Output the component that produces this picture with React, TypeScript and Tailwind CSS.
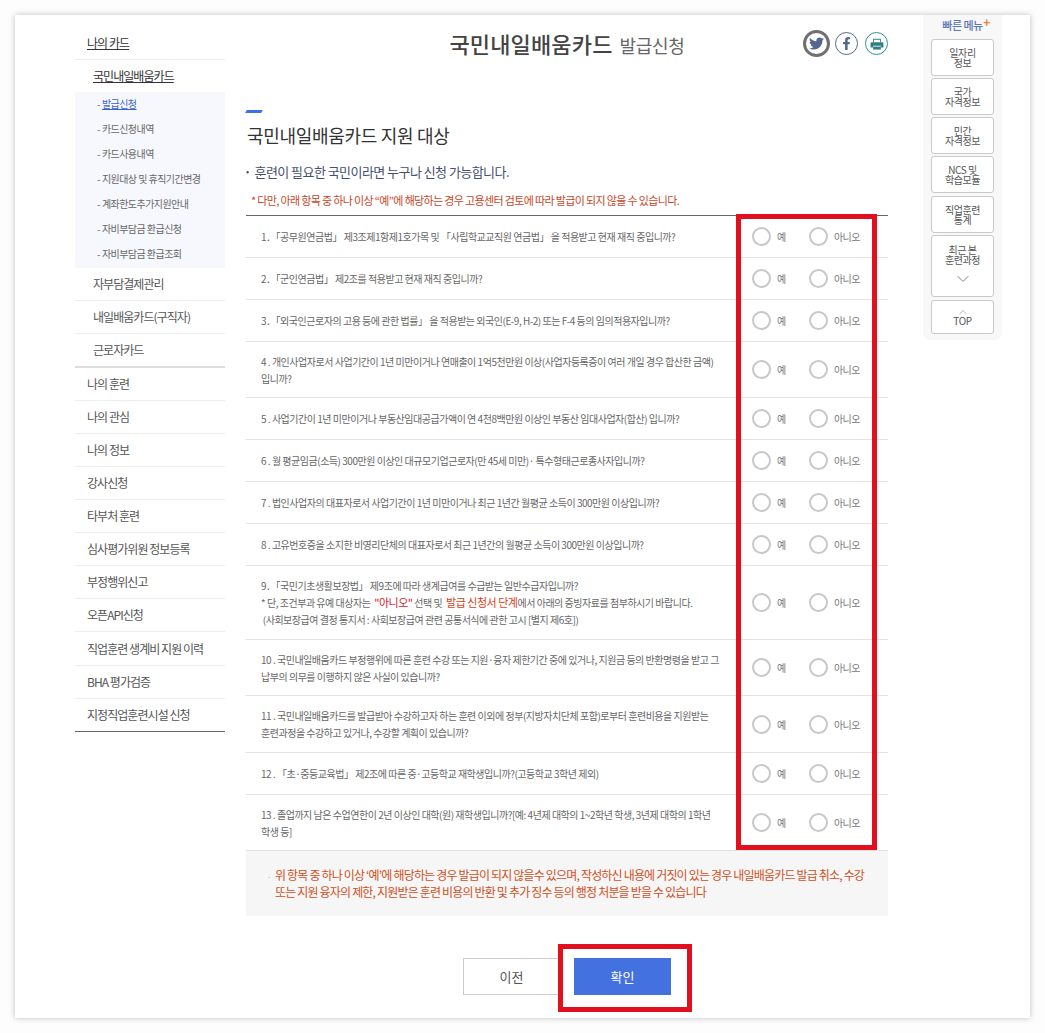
import { FaTwitter, FaFacebookF } from 'react-icons/fa'
import { ChevronDown, ChevronUp } from 'lucide-react'
import type { ReactNode } from 'react'

const subMenu = ['발급신청', '카드신청내역', '카드사용내역', '지원대상 및 휴직기간변경', '계좌한도추가지원안내', '자비부담금 환급신청', '자비부담금 환급조회']
const cardMenu = ['자부담결제관리', '내일배움카드(구직자)', '근로자카드']
const mainMenu = ['나의 훈련', '나의 관심', '나의 정보', '강사신청', '타부처 훈련', '심사평가위원 정보등록', '부정행위신고', '오픈API신청', '직업훈련 생계비 지원 이력', 'BHA 평가검증', '지정직업훈련시설 신청']

const questions: { h: string; text: ReactNode }[] = [
  { h: 'h-[42px]', text: '1．「공무원연금법」 제3조제1항제1호가목 및 「사립학교교직원 연금법」 을 적용받고 현재 재직 중입니까?' },
  { h: 'h-[42px]', text: '2．「군인연금법」 제2조를 적용받고 현재 재직 중입니까?' },
  { h: 'h-[42px]', text: '3．「외국인근로자의 고용 등에 관한 법률」 을 적용받는 외국인(E-9, H-2) 또는 F-4 등의 임의적용자입니까?' },
  { h: 'h-[56px]', text: '4 . 개인사업자로서 사업기간이 1년 미만이거나 연매출이 1억5천만원 이상(사업자등록증이 여러 개일 경우 합산한 금액) 입니까?' },
  { h: 'h-[42px]', text: '5 . 사업기간이 1년 미만이거나 부동산임대공급가액이 연 4천8백만원 이상인 부동산 임대사업자(합산) 입니까?' },
  { h: 'h-[42px]', text: '6 . 월 평균임금(소득) 300만원 이상인 대규모기업근로자(만 45세 미만)· 특수형태근로종사자입니까?' },
  { h: 'h-[42px]', text: '7 . 법인사업자의 대표자로서 사업기간이 1년 미만이거나 최근 1년간 월평균 소득이 300만원 이상입니까?' },
  { h: 'h-[42px]', text: '8 . 고유번호증을 소지한 비영리단체의 대표자로서 최근 1년간의 월평균 소득이 300만원 이상입니까?' },
  {
    h: 'h-[74px]',
    text: (
      <>
        9．「국민기초생활보장법」 제9조에 따라 생계급여를 수급받는 일반수급자입니까?
        <br />
        * 단, 조건부과 유예 대상자는 <span className="text-[11px] text-[#d4202a]">&nbsp;"아니오"</span> 선택 및 <span className="text-[11px] text-[#d8401a]">&nbsp;발급 신청서 단계</span>에서 아래의 증빙자료를 첨부하시기 바랍니다.
        <br />
        &nbsp;(사회보장급여 결정 통지서 : 사회보장급여 관련 공통서식에 관한 고시 [별지 제6호])
      </>
    ),
  },
  { h: 'h-[56px]', text: '10 . 국민내일배움카드 부정행위에 따른 훈련 수강 또는 지원·융자 제한기간 중에 있거나, 지원금 등의 반환명령을 받고 그 납부의 의무를 이행하지 않은 사실이 있습니까?' },
  { h: 'h-[57px]', text: '11 . 국민내일배움카드를 발급받아 수강하고자 하는 훈련 이외에 정부(지방자치단체 포함)로부터 훈련비용을 지원받는 훈련과정을 수강하고 있거나, 수강할 계획이 있습니까?' },
  { h: 'h-[42px]', text: '12 . 「초·중등교육법」 제2조에 따른 중·고등학교 재학생입니까?(고등학교 3학년 제외)' },
  { h: 'h-[56px]', text: '13 . 졸업까지 남은 수업연한이 2년 이상인 대학(원) 재학생입니까?[예: 4년제 대학의 1~2학년 학생, 3년제 대학의 1학년 학생 등]' },
]

const quickMenu = [
  { label: ['일자리', '정보'], h: 'h-[37px]' },
  { label: ['국가', '자격정보'], h: 'h-[37px]' },
  { label: ['민간', '자격정보'], h: 'h-[37px]' },
  { label: ['NCS 및', '학습모듈'], h: 'h-[37px]' },
  { label: ['직업훈련', '통계'], h: 'h-[37px] mt-[1px]' },
]

function Radio({ label, className }: { label: string; className: string }) {
  return (
    <span className={`flex items-center gap-[6px] ${className}`}>
      <span className="h-[19px] w-[19px] shrink-0 rounded-full border-2 border-[#c8c8c8] bg-white" />
      <span className="text-[10px] tracking-[-0.6px] text-[#777]">{label}</span>
    </span>
  )
}

function QuickButton({ children, className }: { children: ReactNode; className: string }) {
  return (
    <div className={`flex w-[63px] flex-col items-center justify-center rounded-[3px] border border-[#c9c9c9] bg-white text-center text-[10px] leading-[10px] tracking-[-0.4px] text-[#555] ${className}`}>
      {children}
    </div>
  )
}

function PrintIcon() {
  return (
    <svg viewBox="0 0 16 14" className="h-[12px] w-[14px]" fill="#2f8085">
      <path d="M3.5 5V1h9v4h-1V2h-7v3z" />
      <path d="M1.5 5h13a1 1 0 0 1 1 1v5h-3V9h-9v2h-3V6a1 1 0 0 1 1-1z" />
      <rect x="3.5" y="10" width="9" height="3.5" />
    </svg>
  )
}

export default function App() {
  return (
    <div
      className="relative h-[1033px] w-[1045px] overflow-hidden bg-[#fdfdfd] p-[15px] text-[#555]"
      style={{ fontFamily: '"Noto Sans CJK KR", "Noto Sans", sans-serif' }}
    >
      <div className="flex h-[1003px] bg-white shadow-[0_0_6px_rgba(0,0,0,0.25)]">
        <aside className="ml-[60px] w-[150px] shrink-0 text-[12px] tracking-[-0.95px] text-[#555]">
          <div className="flex h-[45px] items-end border-b border-[#eee] pb-[7px] pl-[12px] text-[#333] underline">나의 카드</div>
          <div className="flex h-[32px] items-center pl-[18px] text-[#333] underline">국민내일배움카드</div>
          <ul className="h-[176px] bg-[#f6f8fd] text-[10px] tracking-[-0.55px] text-[#666]">
            {subMenu.map((item, i) => (
              <li key={item} className="flex h-[25px] items-center pb-[2px] pl-[22px]">
                - {i === 0 ? <span className="ml-[2px] text-[#3a63cf] underline">{item}</span> : <span className="ml-[2px]">{item}</span>}
              </li>
            ))}
          </ul>
          {cardMenu.map((item, i) => (
            <div key={item} className={`flex items-center pl-[18px] ${i === 2 ? 'h-[34px] border-b-2 border-[#ddd]' : 'h-[33px] border-b border-[#eee]'}`}>
              {item}
            </div>
          ))}
          {mainMenu.map((item, i) => (
            <div key={item} className={`flex items-center pl-[12px] ${i === 8 ? 'h-[34px]' : 'h-[33px]'} ${i === mainMenu.length - 1 ? 'border-b border-[#666]' : 'border-b border-[#eee]'}`}>
              {item}
            </div>
          ))}
        </aside>

        <main className="ml-[21px] w-[642px] shrink-0">
          <div className="relative flex h-[58px] justify-center pt-[13px] text-[#444]">
            <span className="text-[22px] font-medium leading-[30px] tracking-[0.15px]">국민내일배움카드</span>
            <span className="ml-[7px] mt-[3px] text-[18px] leading-[28px] tracking-[-0.3px] text-[#666]">발급신청</span>
            <div className="absolute right-0 top-[15px] flex items-center">
              <span className="flex h-[27px] w-[27px] items-center justify-center rounded-full border-[3px] border-[#707070] text-[15px] text-[#56678f]"><FaTwitter /></span>
              <span className="ml-[5px] flex h-[23px] w-[23px] items-center justify-center rounded-full border border-[#56678f] text-[13px] text-[#56678f]"><FaFacebookF /></span>
              <span className="ml-[7px] flex h-[23px] w-[23px] items-center justify-center rounded-full border border-[#2f8f8a]"><PrintIcon /></span>
            </div>
          </div>
          <div className="ml-0 mt-[37px] h-[3px] w-[16px] -skew-x-[30deg] bg-[#3f6fe0]" />
          <h3 className="ml-px mt-[8px] text-[18px] font-normal leading-[28px] tracking-[-0.3px] text-[#333]">국민내일배움카드 지원 대상</h3>
          <p className="mt-[13px] flex h-[20px] items-center text-[13px] tracking-[-0.55px] text-[#46506e]">
            <span className="mr-[6px] text-[9px]">•</span>훈련이 필요한 국민이라면 누구나 신청 가능합니다.
          </p>
          <p className="ml-[5px] mt-[8px] h-[20px] text-[11px] leading-[20px] tracking-[-0.65px] text-[#c8451f]">* 다만, 아래 항목 중 하나 이상 “예”에 해당하는 경우 고용센터 검토에 따라 발급이 되지 않을 수 있습니다.</p>
          <div className="mt-[5px] border-t border-[#666]">
            {questions.map((q, i) => (
              <div key={i} className={`flex items-center border-b border-[#e2e2e2] ${q.h}`}>
                <div className="w-[490px] shrink-0 break-keep pl-[15px] pr-[12px] text-[10px] leading-[17px] tracking-[-0.48px] text-[#666]">{q.text}</div>
                <Radio label="예" className="w-[57px] pl-[16px] box-content" />
                <Radio label="아니오" className="" />
              </div>
            ))}
          </div>
          <div className="h-[65px] bg-[#f6f6f6] pl-[29px] pr-[20px] pt-[16px] text-[12px] leading-[15px] tracking-[-0.82px] text-[#d0501c]">
            <span className="-ml-[8px] inline-block w-[8px] text-[8px] text-[#aaa]">·</span>위 항목 중 하나 이상 ‘예’에 해당하는 경우 발급이 되지 않을수 있으며, 작성하신 내용에 거짓이 있는 경우 내일배움카드 발급 취소, 수강 또는 지원 융자의 제한, 지원받은 훈련 비용의 반환 및 추가 징수 등의 행정 처분을 받을 수 있습니다
          </div>
          <div className="mt-[42px] flex justify-center gap-[14px]">
            <div className="flex h-[37px] w-[97px] items-center justify-center border border-[#ccc] text-[13px] text-[#555]">이전</div>
            <div className="flex h-[37px] w-[97px] items-center justify-center bg-[#4371e0] text-[13px] text-white">확인</div>
          </div>
        </main>

        <nav className="ml-[35px] flex h-[325px] w-[79px] shrink-0 flex-col items-center rounded-b-[8px] bg-[#f8f8f8]">
          <div className="relative h-[24px] pt-[2px] text-[11px] font-medium leading-[16px] tracking-[-0.5px] text-[#5c74b8]">
            빠른 메뉴<span className="absolute -right-[7px] -top-[1px] text-[12px] font-bold text-[#f08030]">+</span>
          </div>
          <div className="flex flex-col gap-[2px]">
            {quickMenu.map((m) => (
              <QuickButton key={m.label[0]} className={m.h}>
                <span>{m.label[0]}</span>
                <span>{m.label[1]}</span>
              </QuickButton>
            ))}
            <QuickButton className="h-[62px] justify-start pt-[9px]">
              <span>최근 본</span>
              <span>훈련과정</span>
              <ChevronDown className="mt-[4px] h-[20px] w-[20px] text-[#666]" strokeWidth={1} />
            </QuickButton>
            <QuickButton className="mt-[1px] h-[34px] pb-[3px]">
              <ChevronUp className="-mb-[2px] h-[12px] w-[14px] text-[#666]" strokeWidth={1} />
              <span>TOP</span>
            </QuickButton>
          </div>
        </nav>
      </div>

      <div className="absolute left-[736px] top-[214px] h-[636px] w-[141px] border-[5px] border-[#e0101e]" />
      <div className="absolute left-[558px] top-[944px] h-[68px] w-[134px] border-[5px] border-[#e0101e]" />
    </div>
  )
}
